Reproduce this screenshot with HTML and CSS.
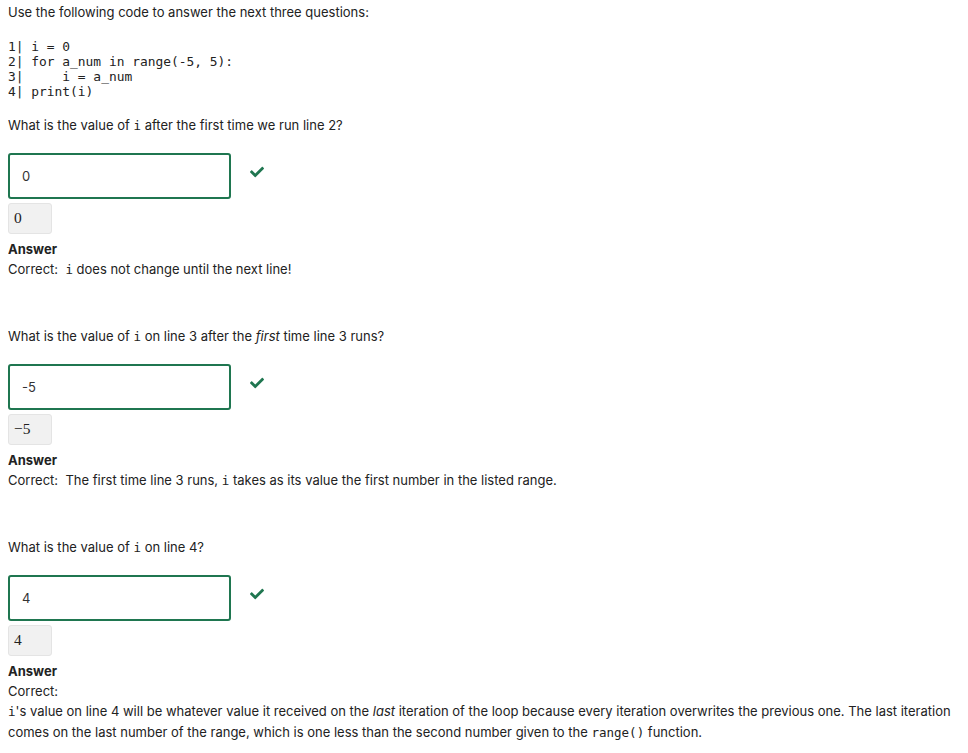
FILE: index.html
```html
<!DOCTYPE html>
<html>
<head>
<meta charset="utf-8">
<link rel="stylesheet" href="styles.css">
</head>
<body>
<p class="intro">Use the following code to answer the next three questions:</p>
<pre class="code">1| i = 0
2| for a_num in range(-5, 5):
3|     i = a_num
4| print(i)</pre>

<section class="q q-first">
  <p class="prompt">What is the value of <code>i</code> after the first time we run line 2?</p>
  <div class="input-row">
    <div class="input">0</div>
    <svg class="check" viewBox="0 0 512 512"><path d="M173.898 439.404l-166.4-166.4c-9.997-9.997-9.997-26.206 0-36.204l36.203-36.204c9.997-9.998 26.207-9.998 36.204 0L192 312.69 432.095 72.596c9.997-9.997 26.207-9.997 36.204 0l36.203 36.204c9.997 9.997 9.997 26.206 0 36.204l-294.4 294.401c-9.998 9.997-26.207 9.997-36.204-.001z"/></svg>
  </div>
  <div class="math">0</div>
  <div class="answer-title">Answer</div>
  <p class="answer">Correct:&nbsp; <code>i</code> does not change until the next line!</p>
</section>

<section class="q">
  <p class="prompt">What is the value of <code>i</code> on line 3 after the <em>first</em> time line 3 runs?</p>
  <div class="input-row">
    <div class="input">-5</div>
    <svg class="check" viewBox="0 0 512 512"><path d="M173.898 439.404l-166.4-166.4c-9.997-9.997-9.997-26.206 0-36.204l36.203-36.204c9.997-9.998 26.207-9.998 36.204 0L192 312.69 432.095 72.596c9.997-9.997 26.207-9.997 36.204 0l36.203 36.204c9.997 9.997 9.997 26.206 0 36.204l-294.4 294.401c-9.998 9.997-26.207 9.997-36.204-.001z"/></svg>
  </div>
  <div class="math">−5</div>
  <div class="answer-title">Answer</div>
  <p class="answer">Correct:&nbsp; The first time line 3 runs, <code>i</code> takes as its value the first number in the listed range.</p>
</section>

<section class="q">
  <p class="prompt">What is the value of <code>i</code> on line 4?</p>
  <div class="input-row">
    <div class="input">4</div>
    <svg class="check" viewBox="0 0 512 512"><path d="M173.898 439.404l-166.4-166.4c-9.997-9.997-9.997-26.206 0-36.204l36.203-36.204c9.997-9.998 26.207-9.998 36.204 0L192 312.69 432.095 72.596c9.997-9.997 26.207-9.997 36.204 0l36.203 36.204c9.997 9.997 9.997 26.206 0 36.204l-294.4 294.401c-9.998 9.997-26.207 9.997-36.204-.001z"/></svg>
  </div>
  <div class="math">4</div>
  <div class="answer-title">Answer</div>
  <p class="answer">Correct:<br><code>i</code>'s value on line 4 will be whatever value it received on the <em>last</em> iteration of the loop because every iteration overwrites the previous one. The last iteration comes on the last number of the range, which is one less than the second number given to the <code>range()</code> function.</p>
</section>
</body>
</html>
```

FILE: styles.css
```css
html, body {
  background: #ffffff;
}
body {
  margin: 0 8px;
  padding-top: 2px;
  font-family: Inter, "Liberation Sans", sans-serif;
  font-size: 13px;
  line-height: 20px;
  color: #222222;
}
p {
  margin: 0;
}
code {
  font-family: "DejaVu Sans Mono", "Liberation Mono", monospace;
  font-size: 12.5px;
  line-height: 1;
}
.code {
  font-family: "DejaVu Sans Mono", "Liberation Mono", monospace;
  font-size: 12.9px;
  margin: 16.5px 0 0 0;
  line-height: 15px;
  color: #222222;
}
.q {
  margin-top: 47.5px;
}
.q-first {
  margin-top: 16.5px;
}
.input-row {
  display: flex;
  align-items: center;
  margin-top: 18px;
}
.input {
  box-sizing: border-box;
  width: 223px;
  height: 46px;
  border: 2px solid #1f7650;
  border-radius: 3px;
  padding: 0 12px;
  display: flex;
  align-items: center;
  color: #333333;
  font-size: 13px;
}
.check {
  width: 14px;
  height: 14px;
  fill: #1f7650;
  margin-left: 19px;
  margin-top: -8px;
}
.math {
  box-sizing: border-box;
  margin-top: 4px;
  width: 44px;
  height: 30.5px;
  background: #f1f1f1;
  border: 1px solid #e4e4e4;
  border-radius: 3px;
  padding-left: 5px;
  display: flex;
  align-items: center;
  font-family: "Liberation Serif", serif;
  font-size: 15.5px;
  color: #222222;
}
.answer-title {
  margin-top: 5px;
  font-weight: 700;
}
.answer {
  color: #222222;
}
.q:last-child .answer {
  line-height: 20.5px;
}
```
